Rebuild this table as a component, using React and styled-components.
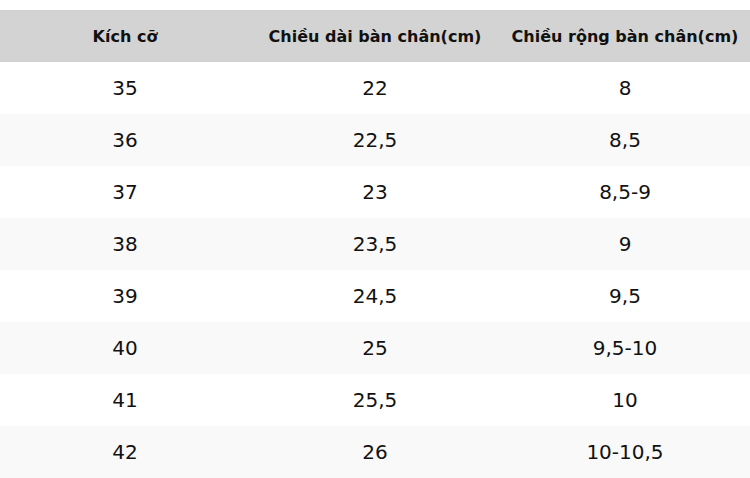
import styled, { createGlobalStyle } from 'styled-components';

const GlobalStyle = createGlobalStyle`
    html, body {
        margin: 0;
        padding: 0;
        background: #ffffff;
    }
    body {
        font-family: "DejaVu Sans", Verdana, sans-serif;
    }
`;

const headers = ['Kích cỡ', 'Chiều dài bàn chân(cm)', 'Chiều rộng bàn chân(cm)'];

const rows = [
    ['35', '22', '8'],
    ['36', '22,5', '8,5'],
    ['37', '23', '8,5-9'],
    ['38', '23,5', '9'],
    ['39', '24,5', '9,5'],
    ['40', '25', '9,5-10'],
    ['41', '25,5', '10'],
    ['42', '26', '10-10,5'],
];

const App = () => {
    return (
        <>
            <GlobalStyle />
            <SizeTable>
                <HeadRow>
                    {headers.map((h) => (
                        <HeadCell key={h}>{h}</HeadCell>
                    ))}
                </HeadRow>
                {rows.map((r, i) => (
                    <BodyRow key={r[0]} $striped={i % 2 === 1}>
                        {r.map((c, j) => (
                            <BodyCell key={j}>{c}</BodyCell>
                        ))}
                    </BodyRow>
                ))}
            </SizeTable>
        </>
    );
};

const SizeTable = styled.div`
    width: 750px;
    padding-top: 10px;
    display: flex;
    flex-direction: column;
`;

const HeadRow = styled.div`
    display: grid;
    grid-template-columns: repeat(3, 1fr);
    height: 52px;
    background: #d3d3d3;
`;

const HeadCell = styled.div`
    display: flex;
    align-items: center;
    justify-content: center;
    font-size: 16px;
    font-weight: 700;
    color: #111111;
    white-space: nowrap;
`;

const BodyRow = styled.div`
    display: grid;
    grid-template-columns: repeat(3, 1fr);
    height: 52px;
    background: ${(p) => (p.$striped ? '#f9f9f9' : '#ffffff')};
`;

const BodyCell = styled.div`
    display: flex;
    align-items: center;
    justify-content: center;
    font-size: 20px;
    color: #111111;
`;

export default App;
